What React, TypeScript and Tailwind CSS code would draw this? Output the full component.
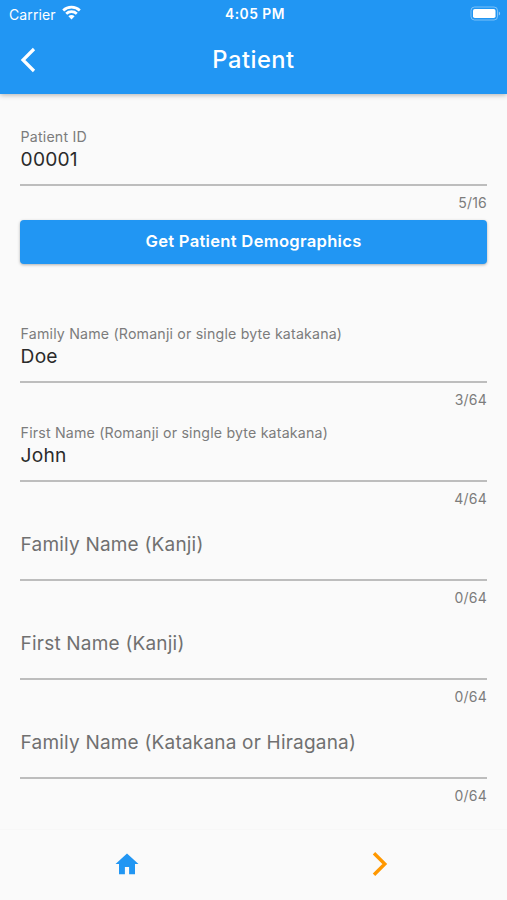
import React from 'react'

interface Field {
  label: string
  value: string
  max: number
}

const nameFields: Field[] = [
  { label: 'Family Name (Romanji or single byte katakana)', value: 'Doe', max: 64 },
  { label: 'First Name (Romanji or single byte katakana)', value: 'John', max: 64 },
  { label: 'Family Name (Kanji)', value: '', max: 64 },
  { label: 'First Name (Kanji)', value: '', max: 64 },
  { label: 'Family Name (Katakana or Hiragana)', value: '', max: 64 },
]

function TextField({ label, value, max }: Field) {
  return (
    <div className="h-[99px]">
      <div className="h-[65px] border-b-2 border-[#bdbdbd] pl-[0.6px]">
        {value ? (
          <>
            <div className="pt-[7px] text-[14.2px] leading-[18px] tracking-[0.18px] text-[#7c7c7c]">{label}</div>
            <div className="text-[19.2px] leading-[26px] tracking-[0.2px] text-[#2b2b2b]">{value}</div>
          </>
        ) : (
          <div className="pt-[16px] text-[19px] leading-[26px] tracking-[0.2px] text-[#707070]">{label}</div>
        )}
      </div>
      <div className="pt-[8px] text-right text-[14px] leading-[18px] tracking-[0.2px] text-[#7c7c7c]">
        {value.length}/{max}
      </div>
    </div>
  )
}

function StatusBar() {
  return (
    <div className="grid h-7 grid-cols-3 items-center pl-[9px] pr-[6px] text-white">
      <div className="flex items-center gap-[6px] text-[14px]">
        <span className="tracking-[0.1px]">Carrier</span>
        <svg className="-mt-[3px]" width="19" height="15" viewBox="0 0 19 15" fill="none" stroke="currentColor" strokeWidth="2.7">
          <path d="M1.2 5.5C5.8 1 13.2 1 17.8 5.5" />
          <path d="M4.2 8.8c2.9-2.8 7.7-2.8 10.6 0" />
          <path d="M9.5 14.4 6.4 11.2c1.8-1.6 4.4-1.6 6.2 0z" fill="currentColor" stroke="none" />
        </svg>
      </div>
      <span className="text-center text-[13.8px] font-semibold tracking-[0.5px]">4:05 PM</span>
      <svg className="-mt-px justify-self-end" width="31" height="15" viewBox="0 0 31 15" fill="none">
        <rect x="1" y="1" width="26.5" height="13" rx="3.5" stroke="white" strokeOpacity="0.4" />
        <rect x="3" y="3" width="22.5" height="9" rx="1.8" fill="white" />
        <path d="M28.8 5.5c1.8.6 1.8 3.4 0 4z" fill="white" fillOpacity="0.5" />
      </svg>
    </div>
  )
}

export default function App() {
  return (
    <div className="flex h-[900px] w-[507px] flex-col overflow-hidden bg-[#fafafa] font-['Inter',sans-serif]">
      {/* Header */}
      <header className="z-10 h-[94px] shrink-0 bg-[#2196f3] shadow-[0_1px_5px_rgba(0,0,0,0.3)]">
        <StatusBar />
        <div className="grid h-[64px] grid-cols-3 items-center text-white">
          <button className="pl-[20px]" aria-label="Back">
            <svg width="16" height="26" viewBox="0 0 16 26" fill="none" stroke="currentColor" strokeWidth="3.2">
              <path d="M14 2 3 13l11 11" />
            </svg>
          </button>
          <h1 className="text-center text-[23.7px] font-medium tracking-[0.5px]">Patient</h1>
        </div>
      </header>

      {/* Form */}
      <main className="h-[735px] shrink-0 px-5 pt-[27px]">
        <TextField label="Patient ID" value="00001" max={16} />
        <button className="mb-[54px] h-11 w-full rounded-[4px] bg-[#2196f3] pb-[2px] text-[16.6px] font-semibold tracking-[0.28px] text-white shadow-[0_1px_3px_rgba(0,0,0,0.3)]">
          Get Patient Demographics
        </button>
        {nameFields.map((field) => (
          <TextField key={field.label} {...field} />
        ))}
      </main>

      {/* Bottom navigation */}
      <nav className="grid flex-1 grid-cols-2 items-start border-t border-[#f7f7f7] pt-[20px]">
        <button className="flex justify-center" aria-label="Home">
          <svg width="28" height="28" viewBox="0 0 28 28" fill="#2196f3">
            <path d="M14 3.4 2.5 14H6v10.3h5.9v-7.2h4.2v7.2H22V14h3.5z" />
          </svg>
        </button>
        <button className="flex justify-center" aria-label="Next">
          <svg width="28" height="28" viewBox="0 0 28 28" fill="none" stroke="#ff9800" strokeWidth="3.4">
            <path d="m8 3.2 10.8 10.8L8 24.8" />
          </svg>
        </button>
      </nav>
    </div>
  )
}
